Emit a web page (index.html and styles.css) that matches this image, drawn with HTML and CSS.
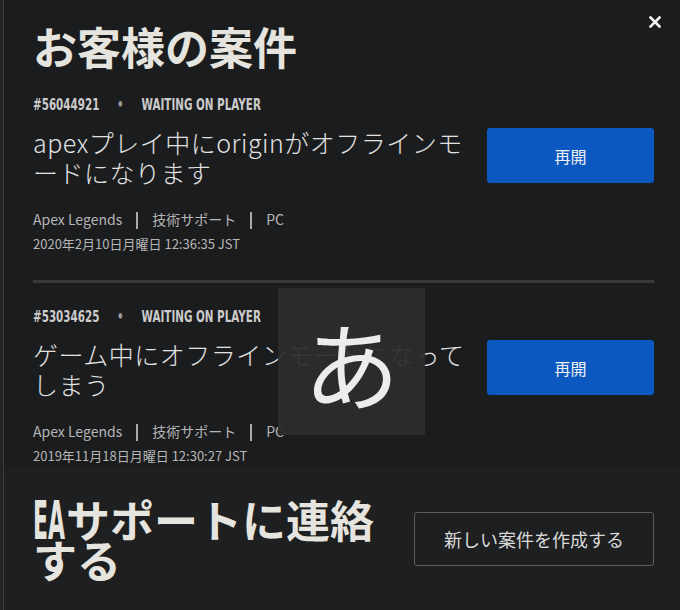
FILE: index.html
```html
<!DOCTYPE html>
<html lang="ja">
<head>
    <meta charset="UTF-8">
    <meta name="viewport" content="width=device-width, initial-scale=1.0">
    <title>お客様の案件</title>
    <link rel="stylesheet" href="styles.css">
</head>
<body>
    <div class="modal">
        <button class="close" aria-label="閉じる">
            <svg width="12" height="12" viewBox="0 0 12 12">
                <path d="M1.5 1.5 L10.5 10.5 M10.5 1.5 L1.5 10.5" stroke="#f2f2f2" stroke-width="2.6" stroke-linecap="square"/>
            </svg>
        </button>

        <div class="cases">
            <h1 class="cases-title">お客様の案件</h1>

            <div class="case">
                <div class="case-meta">
                    <span>#56044921</span>
                    <span class="dot">•</span>
                    <span>WAITING ON PLAYER</span>
                </div>
                <div class="case-row">
                    <div class="case-name">apexプレイ中にoriginがオフラインモードになります</div>
                    <button class="resume">再開</button>
                </div>
                <div class="case-tags">
                    <span>Apex Legends</span><span class="sep"></span><span>技術サポート</span><span class="sep"></span><span>PC</span>
                </div>
                <div class="case-date">2020年2月10日月曜日 12:36:35 JST</div>
            </div>

            <hr class="divider">

            <div class="case">
                <div class="case-meta">
                    <span>#53034625</span>
                    <span class="dot">•</span>
                    <span>WAITING ON PLAYER</span>
                </div>
                <div class="case-row">
                    <div class="case-name">ゲーム中にオフラインモードになってしまう</div>
                    <button class="resume">再開</button>
                </div>
                <div class="case-tags">
                    <span>Apex Legends</span><span class="sep"></span><span>技術サポート</span><span class="sep"></span><span>PC</span>
                </div>
                <div class="case-date">2019年11月18日月曜日 12:30:27 JST</div>
            </div>
        </div>

        <div class="contact">
            <h2 class="contact-title"><span class="ea">EA</span>サポートに連絡する</h2>
            <button class="new-case">新しい案件を作成する</button>
        </div>

        <div class="ime">あ</div>
    </div>
</body>
</html>
```

FILE: styles.css
```css
body {
    margin: 0;
    background-color: #232323;
    font-family: "Noto Sans CJK JP", "Noto Sans", sans-serif;
}

.modal {
    position: relative;
    margin-left: 3px;
    border-left: 1px solid #3a3a3a;
    min-height: 610px;
    display: flex;
    flex-direction: column;
    background-color: #1b1c1e;
}

.close {
    position: absolute;
    top: 16px;
    right: 19px;
    padding: 0;
    border: none;
    background: none;
    cursor: pointer;
}

.cases {
    padding: 20px 26px 2px 29px;
}

.cases-title {
    margin: 0;
    font-size: 44px;
    line-height: 52px;
    font-weight: 700;
    color: #e6e4df;
}

.case {
    margin-top: 23px;
}

/* condensed label font, squeezed to match the narrow brand face */
.case-meta {
    display: flex;
    gap: 24px;
    font-family: "DejaVu Sans", sans-serif;
    font-weight: bold;
    font-size: 14px;
    line-height: 20px;
    color: #cbcbcb;
    transform: scale(0.74, 1.08);
    transform-origin: left center;
}

.dot {
    color: #9a9a9a;
}

.case-row {
    display: flex;
    align-items: center;
    justify-content: space-between;
    margin-top: 12px;
}

.case-name {
    width: 440px;
    font-size: 25px;
    font-weight: 300;
    letter-spacing: 0.5px;
    line-height: 30px;
    color: #e2e2e2;
}

.resume {
    width: 167px;
    height: 55px;
    margin-top: -3px;
    border: none;
    border-radius: 3px;
    background-color: #0b58c1;
    color: #f2f2f2;
    font-family: "Noto Sans CJK JP", sans-serif;
    font-size: 16px;
    cursor: pointer;
}

.case-tags {
    margin-top: 22px;
    font-size: 14px;
    line-height: 20px;
    color: #b6b6b6;
}

.sep {
    display: inline-block;
    width: 2px;
    height: 17px;
    margin: 0 14px;
    vertical-align: -4px;
    background-color: #a9a9a9;
}

.case-date {
    margin-top: 5px;
    font-size: 13px;
    line-height: 20px;
    color: #b6b6b6;
}

.divider {
    margin: 26px 0 0;
    height: 3px;
    border: none;
    background-color: #38393b;
}

.case + .divider + .case {
    margin-top: 24px;
}

.contact {
    flex: 1;
    display: flex;
    align-items: center;
    justify-content: space-between;
    padding: 0 26px 0 29px;
    background-color: #1e1f21;
}

.contact-title {
    width: 350px;
    margin: 0;
    font-size: 44px;
    line-height: 36px;
    font-weight: 700;
    color: #e6e4df;
}

.ea {
    display: inline-block;
    width: 33px;
    font-family: "DejaVu Sans", sans-serif;
    transform: scale(0.5, 1.2);
    transform-origin: left 75%;
}

.new-case {
    width: 240px;
    height: 54px;
    border: 1px solid #5c5c5c;
    border-radius: 3px;
    background: none;
    color: #dadada;
    font-family: "Noto Sans CJK JP", sans-serif;
    font-size: 18px;
    cursor: pointer;
}

.ime {
    position: absolute;
    left: 274px;
    top: 288px;
    width: 147px;
    height: 147px;
    display: flex;
    align-items: center;
    justify-content: center;
    background-color: rgba(44, 44, 44, 0.93);
    color: #ececec;
    font-size: 96px;
    line-height: 1;
}
```
